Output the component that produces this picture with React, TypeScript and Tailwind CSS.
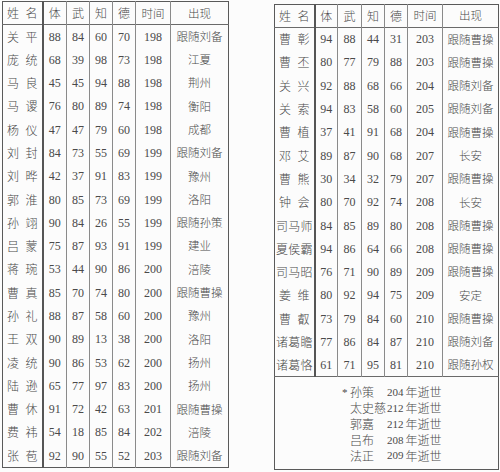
import React from 'react';

type Row = [string, number, number, number, number, number, string];

const leftRows: Row[] = [
  ['关平', 88, 84, 60, 70, 198, '跟随刘备'],
  ['庞统', 68, 39, 98, 73, 198, '江夏'],
  ['马良', 45, 45, 94, 88, 198, '荆州'],
  ['马谡', 76, 80, 89, 74, 198, '衡阳'],
  ['杨仪', 47, 47, 79, 60, 198, '成都'],
  ['刘封', 84, 73, 55, 69, 199, '跟随刘备'],
  ['刘晔', 42, 37, 91, 83, 199, '豫州'],
  ['郭淮', 80, 85, 73, 69, 199, '洛阳'],
  ['孙翊', 90, 84, 26, 55, 199, '跟随孙策'],
  ['吕蒙', 75, 87, 93, 91, 199, '建业'],
  ['蒋琬', 53, 44, 90, 86, 200, '涪陵'],
  ['曹真', 85, 70, 74, 80, 200, '跟随曹操'],
  ['孙礼', 88, 87, 58, 60, 200, '豫州'],
  ['王双', 90, 89, 13, 38, 200, '洛阳'],
  ['凌统', 90, 86, 53, 62, 200, '扬州'],
  ['陆逊', 65, 77, 97, 83, 200, '扬州'],
  ['曹休', 91, 72, 42, 63, 201, '跟随曹操'],
  ['费祎', 54, 18, 85, 84, 202, '涪陵'],
  ['张苞', 92, 90, 55, 52, 203, '跟随刘备'],
];

const rightRows: Row[] = [
  ['曹彰', 94, 88, 44, 31, 203, '跟随曹操'],
  ['曹丕', 80, 77, 79, 88, 203, '跟随曹操'],
  ['关兴', 92, 88, 68, 66, 204, '跟随刘备'],
  ['关索', 94, 83, 58, 60, 205, '跟随刘备'],
  ['曹植', 37, 41, 91, 68, 204, '跟随曹操'],
  ['邓艾', 89, 87, 90, 68, 207, '长安'],
  ['曹熊', 30, 34, 32, 79, 207, '跟随曹操'],
  ['钟会', 80, 70, 92, 74, 208, '长安'],
  ['司马师', 84, 85, 89, 80, 208, '跟随曹操'],
  ['夏侯霸', 94, 86, 64, 66, 208, '跟随曹操'],
  ['司马昭', 76, 71, 90, 89, 209, '跟随曹操'],
  ['姜维', 80, 92, 94, 75, 209, '安定'],
  ['曹叡', 73, 79, 84, 60, 210, '跟随曹操'],
  ['诸葛瞻', 77, 86, 84, 87, 210, '跟随刘备'],
  ['诸葛恪', 61, 71, 95, 81, 210, '跟随孙权'],
];

const deaths = [
  ['孙策', '204'],
  ['太史慈', '212'],
  ['郭嘉', '212'],
  ['吕布', '208'],
  ['法正', '209'],
];

const cjk = "font-['Noto_Sans_CJK_SC',sans-serif] font-light";
const num = "font-['Liberation_Serif','Noto_Sans_CJK_SC',serif]";

const Name = ({ text }: { text: string }) => (
  <div
    className={`flex justify-between ${text.length > 2 ? 'px-[1px] text-[12px]' : 'px-[4px] text-[12px]'} ${cjk}`}
  >
    {text.split('').map((c, i) => (
      <span key={i}>{c}</span>
    ))}
  </div>
);

const Cols = ({ w }: { w: number[] }) => (
  <colgroup>
    {w.map((x, i) => (
      <col key={i} style={{ width: x }} />
    ))}
  </colgroup>
);

const Header = ({ h }: { h: string }) => (
  <tr className={`${h} border-b border-[#6a6a6a]`}>
    <td className="border-r-2 border-[#555]">
      <Name text="姓名" />
    </td>
    {['体', '武', '知', '德'].map((t) => (
      <td key={t} className={`border-r border-[#8a8a8a] text-center ${cjk} text-[12px]`}>
        {t}
      </td>
    ))}
    <td className={`border-r border-[#8a8a8a] text-center ${cjk} text-[11.5px]`}>时间</td>
    <td className={`text-center ${cjk} text-[11.5px]`}>出现</td>
  </tr>
);

const Body = ({ rows, h }: { rows: Row[]; h: string }) => (
  <>
    {rows.map((r) => (
      <tr key={r[0]} className={h}>
        <td className="border-r-2 border-[#555]">
          <Name text={r[0]} />
        </td>
        {[r[1], r[2], r[3], r[4]].map((v, i) => (
          <td key={i} className={`border-r border-[#8a8a8a] text-center ${num} text-[12px]`}>
            {v}
          </td>
        ))}
        <td className={`border-r border-[#8a8a8a] text-center ${num} text-[12px]`}>{r[5]}</td>
        <td className={`text-center ${cjk} text-[11.5px]`}>{r[6]}</td>
      </tr>
    ))}
  </>
);

export default function App() {
  return (
    <div className="w-[500px] h-[472px] bg-[#fcfcfc] text-[#4a4a4a] flex items-start overflow-hidden">
      <table className="ml-[2px] mt-[1px] w-[226px] table-fixed border-collapse border border-[#5a5a5a]">
        <Cols w={[40, 24, 23, 23, 23, 35, 58]} />
        <tbody>
          <Header h="h-[23.3px]" />
          <Body rows={leftRows} h="h-[23.3px]" />
        </tbody>
      </table>

      <table className="ml-[45px] mt-[4px] w-[224px] table-fixed border-collapse border border-[#5a5a5a]">
        <Cols w={[40, 23, 24, 23, 23, 35, 56]} />
        <tbody>
          <Header h="h-[23px]" />
          <Body rows={rightRows} h="h-[23.3px]" />
          <tr className="border-t border-[#6a6a6a]">
            <td colSpan={7} className="h-[93px] align-top">
              <div className="pt-[7px] pl-[67px] flex flex-col">
                {deaths.map(([n, y], i) => (
                  <div key={n} className="h-[15.8px] flex items-center">
                    <span className={`w-[8px] ${num} text-[11px]`}>{i === 0 ? '*' : ''}</span>
                    <span className={`w-[37px] ${cjk} text-[12px] leading-none`}>{n}</span>
                    <span className={`${num} text-[11px] mr-[2px]`}>{y}</span>
                    <span className={`${cjk} text-[12px] leading-none`}>年逝世</span>
                  </div>
                ))}
              </div>
            </td>
          </tr>
        </tbody>
      </table>
    </div>
  );
}
